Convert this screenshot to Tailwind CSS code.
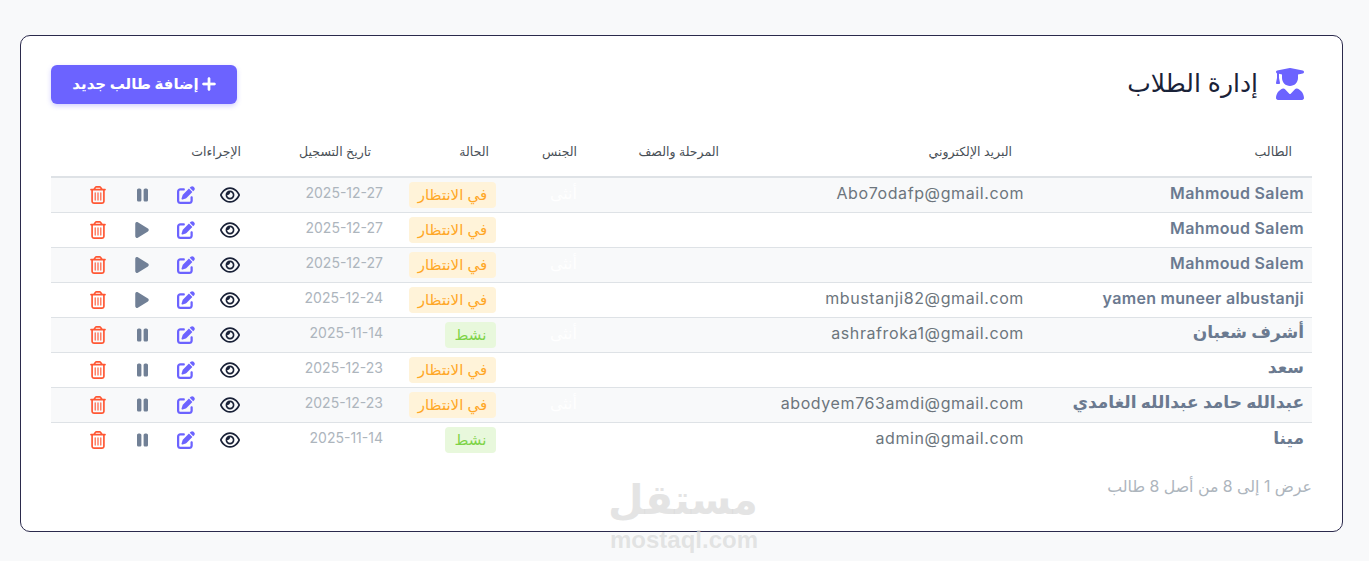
<!DOCTYPE html>
<html lang="ar" dir="rtl">
<head>
<meta charset="UTF-8">
<title>إدارة الطلاب</title>
<script src="https://cdn.jsdelivr.net/npm/@tailwindcss/browser@4"></script>
</head>
<body class="bg-[#f8f9fa] font-['Inter','DejaVu_Sans',sans-serif] text-[#6c757d]">
<svg class="hidden">
  <symbol id="eye" viewBox="0 0 576 512"><path fill="currentColor" d="M288 80c-65.2 0-118.8 29.6-159.9 67.7C89.6 183.5 63 226 49.4 256c13.6 30 40.2 72.5 78.6 108.3C169.2 402.4 222.8 432 288 432s118.8-29.6 159.9-67.7C486.4 328.5 513 286 526.6 256c-13.6-30-40.2-72.5-78.6-108.3C406.8 109.6 353.2 80 288 80zM95.4 112.6C142.5 68.8 207.2 32 288 32s145.5 36.8 192.6 80.6c46.8 43.5 78.1 95.4 93 131.1c3.3 7.9 3.3 16.7 0 24.6c-14.9 35.7-46.2 87.7-93 131.1C433.5 443.2 368.8 480 288 480s-145.5-36.8-192.6-80.6C48.6 356 17.3 304 2.5 268.3c-3.3-7.9-3.3-16.7 0-24.6C17.3 208 48.6 156 95.4 112.6zM288 336c44.2 0 80-35.8 80-80s-35.8-80-80-80c-.7 0-1.3 0-2 0c1.3 5.1 2 10.5 2 16c0 35.3-28.7 64-64 64c-5.5 0-10.9-.7-16-2c0 .7 0 1.3 0 2c0 44.2 35.8 80 80 80zm0-208a128 128 0 1 1 0 256 128 128 0 1 1 0-256z"/></symbol>
  <symbol id="edit" viewBox="0 0 512 512"><path fill="currentColor" d="M471.6 21.7c-21.9-21.9-57.3-21.9-79.2 0L362.3 51.7l97.9 97.9 30.1-30.1c21.9-21.9 21.9-57.3 0-79.2L471.6 21.7zm-299.2 220c-6.1 6.1-10.8 13.6-13.5 21.9l-29.6 88.8c-2.9 8.6-.6 18.1 5.8 24.6s15.9 8.7 24.6 5.8l88.8-29.6c8.2-2.7 15.7-7.4 21.9-13.5L437.7 172.3 339.7 74.3 172.4 241.7zM96 64C43 64 0 107 0 160V416c0 53 43 96 96 96H352c53 0 96-43 96-96V320c0-17.7-14.3-32-32-32s-32 14.3-32 32v96c0 17.7-14.3 32-32 32H96c-17.7 0-32-14.3-32-32V160c0-17.7 14.3-32 32-32h96c17.7 0 32-14.3 32-32s-14.3-32-32-32H96z"/></symbol>
  <symbol id="pause" viewBox="0 0 320 512"><path fill="currentColor" d="M48 64C21.5 64 0 85.5 0 112V400c0 26.5 21.5 48 48 48H80c26.5 0 48-21.5 48-48V112c0-26.5-21.5-48-48-48H48zm192 0c-26.5 0-48 21.5-48 48V400c0 26.5 21.5 48 48 48h32c26.5 0 48-21.5 48-48V112c0-26.5-21.5-48-48-48H240z"/></symbol>
  <symbol id="play" viewBox="0 0 384 512"><path fill="currentColor" d="M73 39c-14.8-9.1-33.4-9.4-48.5-.9S0 62.6 0 80V432c0 17.4 9.4 33.4 24.5 41.9s33.7 8.1 48.5-.9L361 297c14.3-8.7 23-24.2 23-41s-8.7-32.2-23-41L73 39z"/></symbol>
  <symbol id="trash" viewBox="0 0 448 512"><path fill="currentColor" d="M170.5 51.6L151.5 80h145l-19-28.4c-1.5-2.2-4-3.6-6.7-3.6H177.1c-2.7 0-5.2 1.3-6.7 3.6zm147-26.6L354.2 80H368h48 8c13.3 0 24 10.7 24 24s-10.7 24-24 24h-8V432c0 44.2-35.8 80-80 80H112c-44.2 0-80-35.8-80-80V128H24c-13.3 0-24-10.7-24-24S10.7 80 24 80h8H80 93.8l36.7-55.1C140.9 9.4 158.4 0 177.1 0h93.7c18.7 0 36.2 9.4 46.6 24.9zM80 128V432c0 17.7 14.3 32 32 32H336c17.7 0 32-14.3 32-32V128H80zm80 64V400c0 8.8-7.2 16-16 16s-16-7.2-16-16V192c0-8.8 7.2-16 16-16s16 7.2 16 16zm80 0V400c0 8.8-7.2 16-16 16s-16-7.2-16-16V192c0-8.8 7.2-16 16-16s16 7.2 16 16zm80 0V400c0 8.8-7.2 16-16 16s-16-7.2-16-16V192c0-8.8 7.2-16 16-16s16 7.2 16 16z"/></symbol>
</svg>

<div class="relative h-[561px] overflow-hidden pt-[35px] pr-[26px] pl-5">
  <div class="h-[497px] rounded-[10px] border border-[#2b2a4c] bg-white px-[30px] pt-[28px]">
    <!-- Title and add button -->
    <div class="mb-[21px] flex h-[40px] items-center justify-between">
      <div class="flex items-center gap-[18px] pr-[8px]">
        <svg class="h-[32px] w-[28px] text-[#6c63ff]" viewBox="0 0 448 512"><path fill="currentColor" d="M219.3.5c3.1-.6 6.3-.6 9.4 0l200 40C439.9 42.7 448 52.6 448 64s-8.1 21.3-19.3 23.5L352 102.9V160c0 70.7-57.3 128-128 128s-128-57.3-128-128V102.9L48 93.3v65.1l15.7 78.4c.9 4.7-.3 9.6-3.3 13.3s-7.6 5.9-12.4 5.9H16c-4.8 0-9.3-2.1-12.4-5.9s-4.3-8.6-3.3-13.3L16 158.4V86.6C6.5 83.3 0 74.3 0 64C0 52.6 8.1 42.7 19.3 40.5l200-40zM111.9 327.7c10.5-3.4 21.8 .4 29.4 8.5l71 75.5c6.3 6.7 17 6.7 23.3 0l71-75.5c7.6-8.1 18.9-11.9 29.4-8.5C401 348.6 448 409.4 448 481.3c0 17-13.8 30.7-30.7 30.7H30.7C13.8 512 0 498.2 0 481.3c0-71.9 47-132.7 111.9-153.6z"/></svg>
        <h1 class="pb-[2px] font-['Liberation_Sans','DejaVu_Sans',sans-serif] text-[25px] leading-none font-normal text-[#1a2238]">إدارة الطلاب</h1>
      </div>
      <button class="flex h-[39px] w-[186px] items-center justify-center rounded-[6px] bg-[#6c63ff] text-[15px] font-bold text-white shadow-[0_2px_5px_rgba(108,99,255,0.3)]">
        <svg class="h-[16px] w-[14px]" viewBox="0 0 448 512"><path fill="currentColor" stroke="currentColor" stroke-width="24" d="M256 80c0-17.7-14.3-32-32-32s-32 14.3-32 32V224H48c-17.7 0-32 14.3-32 32s14.3 32 32 32H192V432c0 17.7 14.3 32 32 32s32-14.3 32-32V288H400c17.7 0 32-14.3 32-32s-14.3-32-32-32H256V80z"/></svg>
        <span class="mr-[3px]">إضافة طالب جديد</span>
      </button>
    </div>

    <table class="w-full table-fixed border-collapse text-right">
      <colgroup>
        <col class="w-[280px]"><col class="w-[293px]"><col class="w-[142px]"><col class="w-[88px]"><col class="w-[118px]"><col class="w-[130px]"><col class="w-[210px]">
      </colgroup>
      <thead>
        <tr class="h-[52px] border-b-2 border-[#dee2e6] text-[12.5px] text-[#495057]">
          <th class="px-5 pt-[3px] font-normal">الطالب</th>
          <th class="px-5 pt-[3px] font-normal">البريد الإلكتروني</th>
          <th class="px-5 pt-[3px] font-normal">المرحلة والصف</th>
          <th class="px-5 pt-[3px] font-normal">الجنس</th>
          <th class="px-5 pt-[3px] font-normal">الحالة</th>
          <th class="px-5 pt-[3px] font-normal">تاريخ التسجيل</th>
          <th class="px-5 pt-[3px] font-normal">الإجراءات</th>
        </tr>
      </thead>
      <tbody class="text-[16px]">
        <tr class="h-[35px] border-b border-[#dee2e6] bg-[#f8f9fa]">
          <td class="px-2 pb-1 font-semibold tracking-[0.35px] text-[#6b7a90]">Mahmoud Salem</td>
          <td class="px-2 pb-1 tracking-[0.6px]">Abo7odafp@gmail.com</td>
          <td></td>
          <td class="pr-5 pb-1 text-white">أنثى</td>
          <td class="pr-[13px]"><span class="inline-block h-[26px] w-[87px] rounded-[4px] bg-[#fff3d9] text-center text-[15px] leading-[26px] text-[#ffa726]">في الانتظار</span></td>
          <td class="px-2 pb-1 text-[14px] text-[#adb5bd]">2025-12-27</td>
          <td class="pr-[21px]"><div class="flex items-center">
            <svg class="h-[18px] w-[20px] text-[#1a2238]"><use href="#eye"/></svg>
            <svg class="mr-[25px] h-[18px] w-[18px] text-[#6c63ff]"><use href="#edit"/></svg>
            <div class="mr-[26px] flex w-[18px] justify-center"><svg class="h-[18px] w-[11px] text-[#718096]"><use href="#pause"/></svg></div>
            <div class="mr-[26px] flex w-[18px] justify-center"><svg class="h-[18px] w-[16px] text-[#ff5733]"><use href="#trash"/></svg></div>
          </div></td>
        </tr>
        <tr class="h-[35px] border-b border-[#dee2e6]">
          <td class="px-2 pb-1 font-semibold tracking-[0.35px] text-[#6b7a90]">Mahmoud Salem</td>
          <td class="px-2 pb-1"></td>
          <td></td>
          <td></td>
          <td class="pr-[13px]"><span class="inline-block h-[26px] w-[87px] rounded-[4px] bg-[#fff3d9] text-center text-[15px] leading-[26px] text-[#ffa726]">في الانتظار</span></td>
          <td class="px-2 pb-1 text-[14px] text-[#adb5bd]">2025-12-27</td>
          <td class="pr-[21px]"><div class="flex items-center">
            <svg class="h-[18px] w-[20px] text-[#1a2238]"><use href="#eye"/></svg>
            <svg class="mr-[25px] h-[18px] w-[18px] text-[#6c63ff]"><use href="#edit"/></svg>
            <div class="mr-[26px] flex w-[18px] justify-center"><svg class="h-[18px] w-[14px] text-[#718096]"><use href="#play"/></svg></div>
            <div class="mr-[26px] flex w-[18px] justify-center"><svg class="h-[18px] w-[16px] text-[#ff5733]"><use href="#trash"/></svg></div>
          </div></td>
        </tr>
        <tr class="h-[35px] border-b border-[#dee2e6] bg-[#f8f9fa]">
          <td class="px-2 pb-1 font-semibold tracking-[0.35px] text-[#6b7a90]">Mahmoud Salem</td>
          <td class="px-2 pb-1"></td>
          <td></td>
          <td class="pr-5 pb-1 text-white">أنثى</td>
          <td class="pr-[13px]"><span class="inline-block h-[26px] w-[87px] rounded-[4px] bg-[#fff3d9] text-center text-[15px] leading-[26px] text-[#ffa726]">في الانتظار</span></td>
          <td class="px-2 pb-1 text-[14px] text-[#adb5bd]">2025-12-27</td>
          <td class="pr-[21px]"><div class="flex items-center">
            <svg class="h-[18px] w-[20px] text-[#1a2238]"><use href="#eye"/></svg>
            <svg class="mr-[25px] h-[18px] w-[18px] text-[#6c63ff]"><use href="#edit"/></svg>
            <div class="mr-[26px] flex w-[18px] justify-center"><svg class="h-[18px] w-[14px] text-[#718096]"><use href="#play"/></svg></div>
            <div class="mr-[26px] flex w-[18px] justify-center"><svg class="h-[18px] w-[16px] text-[#ff5733]"><use href="#trash"/></svg></div>
          </div></td>
        </tr>
        <tr class="h-[35px] border-b border-[#dee2e6]">
          <td class="px-2 pb-1 font-semibold tracking-[0.3px] text-[#6b7a90]">yamen muneer albustanji</td>
          <td class="px-2 pb-1 tracking-[0.6px]">mbustanji82@gmail.com</td>
          <td></td>
          <td></td>
          <td class="pr-[13px]"><span class="inline-block h-[26px] w-[87px] rounded-[4px] bg-[#fff3d9] text-center text-[15px] leading-[26px] text-[#ffa726]">في الانتظار</span></td>
          <td class="px-2 pb-1 text-[14px] text-[#adb5bd]">2025-12-24</td>
          <td class="pr-[21px]"><div class="flex items-center">
            <svg class="h-[18px] w-[20px] text-[#1a2238]"><use href="#eye"/></svg>
            <svg class="mr-[25px] h-[18px] w-[18px] text-[#6c63ff]"><use href="#edit"/></svg>
            <div class="mr-[26px] flex w-[18px] justify-center"><svg class="h-[18px] w-[14px] text-[#718096]"><use href="#play"/></svg></div>
            <div class="mr-[26px] flex w-[18px] justify-center"><svg class="h-[18px] w-[16px] text-[#ff5733]"><use href="#trash"/></svg></div>
          </div></td>
        </tr>
        <tr class="h-[35px] border-b border-[#dee2e6] bg-[#f8f9fa]">
          <td class="px-2 pb-[3px] text-[17px] font-semibold text-[#6b7a90]">أشرف شعبان</td>
          <td class="px-2 pb-1 tracking-[0.6px]">ashrafroka1@gmail.com</td>
          <td></td>
          <td class="pr-5 pb-1 text-white">أنثى</td>
          <td class="pr-[13px]"><span class="inline-block h-[26px] w-[51px] rounded-[4px] bg-[#e8f8dc] text-center text-[15px] leading-[26px] text-[#7ed348]">نشط</span></td>
          <td class="px-2 pb-1 text-[14px] text-[#adb5bd]">2025-11-14</td>
          <td class="pr-[21px]"><div class="flex items-center">
            <svg class="h-[18px] w-[20px] text-[#1a2238]"><use href="#eye"/></svg>
            <svg class="mr-[25px] h-[18px] w-[18px] text-[#6c63ff]"><use href="#edit"/></svg>
            <div class="mr-[26px] flex w-[18px] justify-center"><svg class="h-[18px] w-[11px] text-[#718096]"><use href="#pause"/></svg></div>
            <div class="mr-[26px] flex w-[18px] justify-center"><svg class="h-[18px] w-[16px] text-[#ff5733]"><use href="#trash"/></svg></div>
          </div></td>
        </tr>
        <tr class="h-[35px] border-b border-[#dee2e6]">
          <td class="px-2 pb-[3px] text-[17px] font-semibold text-[#6b7a90]">سعد</td>
          <td class="px-2 pb-1"></td>
          <td></td>
          <td></td>
          <td class="pr-[13px]"><span class="inline-block h-[26px] w-[87px] rounded-[4px] bg-[#fff3d9] text-center text-[15px] leading-[26px] text-[#ffa726]">في الانتظار</span></td>
          <td class="px-2 pb-1 text-[14px] text-[#adb5bd]">2025-12-23</td>
          <td class="pr-[21px]"><div class="flex items-center">
            <svg class="h-[18px] w-[20px] text-[#1a2238]"><use href="#eye"/></svg>
            <svg class="mr-[25px] h-[18px] w-[18px] text-[#6c63ff]"><use href="#edit"/></svg>
            <div class="mr-[26px] flex w-[18px] justify-center"><svg class="h-[18px] w-[11px] text-[#718096]"><use href="#pause"/></svg></div>
            <div class="mr-[26px] flex w-[18px] justify-center"><svg class="h-[18px] w-[16px] text-[#ff5733]"><use href="#trash"/></svg></div>
          </div></td>
        </tr>
        <tr class="h-[35px] border-b border-[#dee2e6] bg-[#f8f9fa]">
          <td class="px-2 pb-[3px] text-[17px] font-semibold text-[#6b7a90]">عبدالله حامد عبدالله الغامدي</td>
          <td class="px-2 pb-1 tracking-[0.6px]">abodyem763amdi@gmail.com</td>
          <td></td>
          <td class="pr-5 pb-1 text-white">أنثى</td>
          <td class="pr-[13px]"><span class="inline-block h-[26px] w-[87px] rounded-[4px] bg-[#fff3d9] text-center text-[15px] leading-[26px] text-[#ffa726]">في الانتظار</span></td>
          <td class="px-2 pb-1 text-[14px] text-[#adb5bd]">2025-12-23</td>
          <td class="pr-[21px]"><div class="flex items-center">
            <svg class="h-[18px] w-[20px] text-[#1a2238]"><use href="#eye"/></svg>
            <svg class="mr-[25px] h-[18px] w-[18px] text-[#6c63ff]"><use href="#edit"/></svg>
            <div class="mr-[26px] flex w-[18px] justify-center"><svg class="h-[18px] w-[11px] text-[#718096]"><use href="#pause"/></svg></div>
            <div class="mr-[26px] flex w-[18px] justify-center"><svg class="h-[18px] w-[16px] text-[#ff5733]"><use href="#trash"/></svg></div>
          </div></td>
        </tr>
        <tr class="h-[35px]">
          <td class="px-2 pb-[3px] text-[17px] font-semibold text-[#6b7a90]">مينا</td>
          <td class="px-2 pb-1 tracking-[0.6px]">admin@gmail.com</td>
          <td></td>
          <td></td>
          <td class="pr-[13px]"><span class="inline-block h-[26px] w-[51px] rounded-[4px] bg-[#e8f8dc] text-center text-[15px] leading-[26px] text-[#7ed348]">نشط</span></td>
          <td class="px-2 pb-1 text-[14px] text-[#adb5bd]">2025-11-14</td>
          <td class="pr-[21px]"><div class="flex items-center">
            <svg class="h-[18px] w-[20px] text-[#1a2238]"><use href="#eye"/></svg>
            <svg class="mr-[25px] h-[18px] w-[18px] text-[#6c63ff]"><use href="#edit"/></svg>
            <div class="mr-[26px] flex w-[18px] justify-center"><svg class="h-[18px] w-[11px] text-[#718096]"><use href="#pause"/></svg></div>
            <div class="mr-[26px] flex w-[18px] justify-center"><svg class="h-[18px] w-[16px] text-[#ff5733]"><use href="#trash"/></svg></div>
          </div></td>
        </tr>
      </tbody>
    </table>
    <p class="mt-[19px] text-[15.8px] leading-[22px] text-[#adb5bd]">عرض 1 إلى 8 من أصل 8 طالب</p>
  </div>

  <!-- Site watermark -->
  <div class="absolute top-[473px] left-[610px] w-[148px] text-center text-[#d9d9d9]/70">
    <div class="font-['DejaVu_Sans',sans-serif] text-[41px] leading-[55px] font-bold">مستقل</div>
    <div class="font-['Liberation_Sans',sans-serif] text-[24px] leading-[24px] font-bold">mostaql.com</div>
  </div>
</div>
</body>
</html>
